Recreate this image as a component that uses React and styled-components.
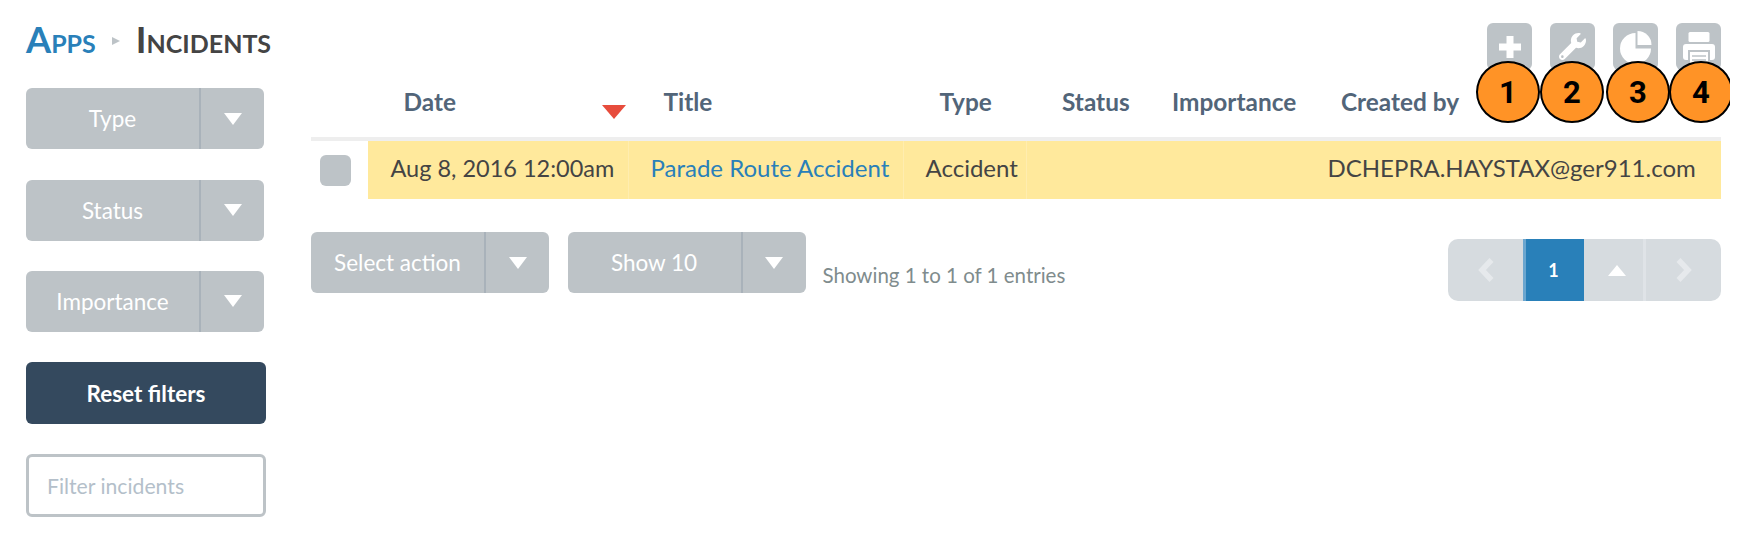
import React from "react";
import styled, { createGlobalStyle } from "styled-components";
import { FaWrench } from "react-icons/fa";

const Global = createGlobalStyle`
  html, body { margin: 0; padding: 0; background: #fff; }
  body { font-family: Lato, "Open Sans", sans-serif; color: #34495e; overflow: hidden; }
  * { box-sizing: border-box; }
`;

const Page = styled.div`
  display: flex;
  width: 1744px;
  height: 559px;
  padding-left: 26px;
`;
const Sidebar = styled.aside`
  width: 240px;
  flex: none;
  display: flex;
  flex-direction: column;
`;
const Heading = styled.h1`
  margin: 17px 0 0;
  height: 71.4px;
  display: flex;
  align-items: baseline;
  font-size: 36.2px;
  line-height: 44px;
  font-weight: 700;
  font-variant: small-caps;
  white-space: nowrap;
  color: #444;
`;
const Crumb = styled.span`
  color: #2980b9;
`;
const CrumbSep = styled.i`
  width: 0;
  height: 0;
  margin: 20px 16px 0 16px;
  border-left: 8px solid #bdc3c7;
  border-top: 4.5px solid transparent;
  border-bottom: 4.5px solid transparent;
  align-self: flex-start;
`;
const Filters = styled.div`
  display: flex;
  flex-direction: column;
  gap: 30.3px;
`;
const SelectBox = styled.div`
  display: flex;
  width: 238px;
  height: 61px;
  background: #bdc3c7;
  border-radius: 6px;
  color: #fff;
  font-size: 22.5px;
  flex: none;
`;
const SelectLabel = styled.div`
  width: 175px;
  display: flex;
  align-items: center;
  justify-content: center;
  white-space: nowrap;
  border-right: 2px solid #a9b2ba;
`;
const SelectCaret = styled.div`
  flex: 1;
  display: flex;
  align-items: center;
  justify-content: center;
  &::after {
    content: "";
    border-top: 12px solid #fff;
    border-left: 9px solid transparent;
    border-right: 9px solid transparent;
  }
`;
const ResetButton = styled.button`
  height: 61.7px;
  border: 0;
  border-radius: 6px;
  background: #34495e;
  color: #fff;
  font: 700 22.5px Lato, sans-serif;
`;
const FilterInput = styled.input`
  height: 63px;
  border: 3px solid #bdc3c7;
  border-radius: 6px;
  padding: 0 18px;
  font: 400 21.2px Lato, sans-serif;
  outline: none;
  &::placeholder { color: #b4bfca; opacity: 1; }
`;
const Main = styled.main`
  width: 1410px;
  margin-left: 45px;
  padding-top: 23px;
  flex: none;
`;
const Toolbar = styled.div`
  display: flex;
  justify-content: flex-end;
  gap: 18px;
  height: 47px;
`;
const ToolButton = styled.div`
  position: relative;
  width: 45px;
  height: 47px;
  background: #bdc3c7;
  border-radius: 6px;
  color: #fff;
  display: flex;
  align-items: center;
  justify-content: center;
`;
const ToolGlyph = styled.svg`
  display: block;
  flex: none;
  margin-top: ${(p) => p.$top ?? 0}px;
`;
const Badge = styled.div`
  position: absolute;
  top: 38px;
  left: ${(p) => p.$left}px;
  width: 64px;
  height: 62px;
  border-radius: 50%;
  background: #ff9326;
  border: 2px solid #000;
  color: #000;
  font: 700 31px Roboto, Arial, sans-serif;
  display: flex;
  align-items: center;
  justify-content: center;
  ${(p) => p.$clip && "clip-path: inset(-1px 3px -1px -1px);"}
`;
const columns = "57px 260px 275px 123px 110px 170px 1fr";
const HeadRow = styled.div`
  display: grid;
  grid-template-columns: ${columns};
  height: 71px;
  border-bottom: 4px solid #eeeeee;
`;
const HeadCell = styled.div`
  padding: 17px 0 0 ${(p) => p.$pad ?? 35.5}px;
  font-size: 24.4px;
  line-height: 30px;
  font-weight: 700;
  color: #526579;
  white-space: nowrap;
  display: flex;
  justify-content: space-between;
`;
const SortMark = styled.i`
  margin: 18px 2px 0 0;
  width: 0;
  height: 0;
  border-top: 14px solid #e74c3c;
  border-left: 12px solid transparent;
  border-right: 12px solid transparent;
`;
const BodyRow = styled.div`
  display: grid;
  grid-template-columns: ${columns};
  height: 58px;
`;
const CheckCell = styled.div`
  padding: 14px 0 0 9px;
`;
const CheckBox = styled.div`
  width: 31px;
  height: 31px;
  border-radius: 6px;
  background: #bdc3c7;
`;
const Cell = styled.div`
  background: #ffe99c;
  border-left: ${(p) => (p.$noRule ? "0" : "1px solid #ffedaf")};
  padding: 0 0 5px ${(p) => p.$pad ?? 21.5}px;
  display: flex;
  align-items: center;
  font-size: ${(p) => p.$size ?? 24}px;
  color: #444;
  white-space: nowrap;
`;
const TitleLink = styled.span`
  color: #2980b9;
`;
const Footer = styled.div`
  display: flex;
  align-items: flex-start;
  margin-top: 33px;
`;
const FooterSelects = styled.div`
  display: flex;
  gap: 18.5px;
`;
const Info = styled.div`
  margin: 31px 0 0 17px;
  font-size: 20.5px;
  line-height: 24px;
  color: #7f8c8d;
  white-space: nowrap;
`;
const Pager = styled.div`
  display: flex;
  margin: 7px 0 0 auto;
  width: 273px;
  height: 62px;
  background: #d6dbdf;
  border-radius: 10px;
  overflow: hidden;
`;
const PageCell = styled.div`
  width: ${(p) => p.$w}px;
  padding-left: ${(p) => (p.$rule ? 6 : 0)}px;
  display: flex;
  align-items: center;
  justify-content: center;
  border-right: ${(p) => (p.$rule ? "3px solid #dfe3e7" : "0")};
`;
const Chevron = styled.svg`
  display: block;
  fill: none;
  stroke: #e6e9ec;
  stroke-width: 5.5;
`;
const PageCurrent = styled.div`
  width: 61px;
  padding-right: 3px;
  background: #2980b9;
  border-left: 3px solid #6ba6cf;
  color: #fff;
  font-size: 18px;
  font-weight: 700;
  display: flex;
  align-items: center;
  justify-content: center;
`;
const UpCaret = styled.i`
  border-bottom: 11px solid #fff;
  border-left: 9px solid transparent;
  border-right: 9px solid transparent;
`;

const Select = ({ children }) => (
  <SelectBox>
    <SelectLabel>{children}</SelectLabel>
    <SelectCaret />
  </SelectBox>
);

const PlusIcon = () => (
  <ToolGlyph width="22" height="22" viewBox="0 0 22 22" $top={1}>
    <path d="M7.5 0h7v7.5H22v7h-7.5V22h-7v-7.5H0v-7h7.5z" fill="#fff" />
  </ToolGlyph>
);
const PieIcon = () => (
  <ToolGlyph width="32" height="34" viewBox="0 0 32 34" $top={3}>
    <path d="M15.5 2V17.5H31A15.5 15.5 0 1 1 15.5 2Z" fill="#fff" />
    <path d="M17.5 0A14 14 0 0 1 31.5 14H17.5Z" fill="#fff" />
  </ToolGlyph>
);
const PrintIcon = () => (
  <ToolGlyph width="32" height="36" viewBox="0 0 32 36" $top={5}>
    <rect x="5.5" y="1" width="21" height="10" rx="1.5" fill="#fff" />
    <rect x="0" y="13" width="32" height="16" rx="3" fill="#fff" />
    <rect x="5" y="19" width="22" height="16" fill="#bdc3c7" />
    <rect x="7" y="21" width="18" height="13" fill="#fff" />
    <path d="M9 25h14M9 29h14" stroke="#bdc3c7" strokeWidth="1.5" />
  </ToolGlyph>
);

export default function App() {
  return (
    <Page>
      <Global />
      <Sidebar>
        <Heading>
          <Crumb>Apps</Crumb>
          <CrumbSep />
          Incidents
        </Heading>
        <Filters>
          <Select>Type</Select>
          <Select>Status</Select>
          <Select>Importance</Select>
          <ResetButton>Reset filters</ResetButton>
          <FilterInput placeholder="Filter incidents" />
        </Filters>
      </Sidebar>
      <Main>
        <Toolbar>
          <ToolButton>
            <PlusIcon />
            <Badge $left={-11}>1</Badge>
          </ToolButton>
          <ToolButton>
            <FaWrench size={27} />
            <Badge $left={-10}>2</Badge>
          </ToolButton>
          <ToolButton>
            <PieIcon />
            <Badge $left={-7}>3</Badge>
          </ToolButton>
          <ToolButton>
            <PrintIcon />
            <Badge $left={-7} $clip>4</Badge>
          </ToolButton>
        </Toolbar>
        <HeadRow>
          <HeadCell />
          <HeadCell>
            Date
            <SortMark />
          </HeadCell>
          <HeadCell>Title</HeadCell>
          <HeadCell $pad={36.5}>Type</HeadCell>
          <HeadCell $pad={36}>Status</HeadCell>
          <HeadCell $pad={36}>Importance</HeadCell>
          <HeadCell $pad={35}>Created by</HeadCell>
        </HeadRow>
        <BodyRow>
          <CheckCell>
            <CheckBox />
          </CheckCell>
          <Cell $noRule $size={23.5} $pad={22.5}>Aug 8, 2016 12:00am</Cell>
          <Cell>
            <TitleLink>Parade Route Accident</TitleLink>
          </Cell>
          <Cell>Accident</Cell>
          <Cell />
          <Cell $noRule />
          <Cell $noRule>DCHEPRA.HAYSTAX@ger911.com</Cell>
        </BodyRow>
        <Footer>
          <FooterSelects>
            <Select>Select action</Select>
            <Select>Show 10</Select>
          </FooterSelects>
          <Info>Showing 1 to 1 of 1 entries</Info>
          <Pager>
            <PageCell $w={75}>
              <Chevron width="16" height="24" viewBox="0 0 16 24">
                <path d="M13.5 2 4 12l9.5 10" />
              </Chevron>
            </PageCell>
            <PageCurrent>1</PageCurrent>
            <PageCell $w={62} $rule>
              <UpCaret />
            </PageCell>
            <PageCell $w={75}>
              <Chevron width="16" height="24" viewBox="0 0 16 24">
                <path d="M2.5 2 12 12l-9.5 10" />
              </Chevron>
            </PageCell>
          </Pager>
        </Footer>
      </Main>
    </Page>
  );
}
